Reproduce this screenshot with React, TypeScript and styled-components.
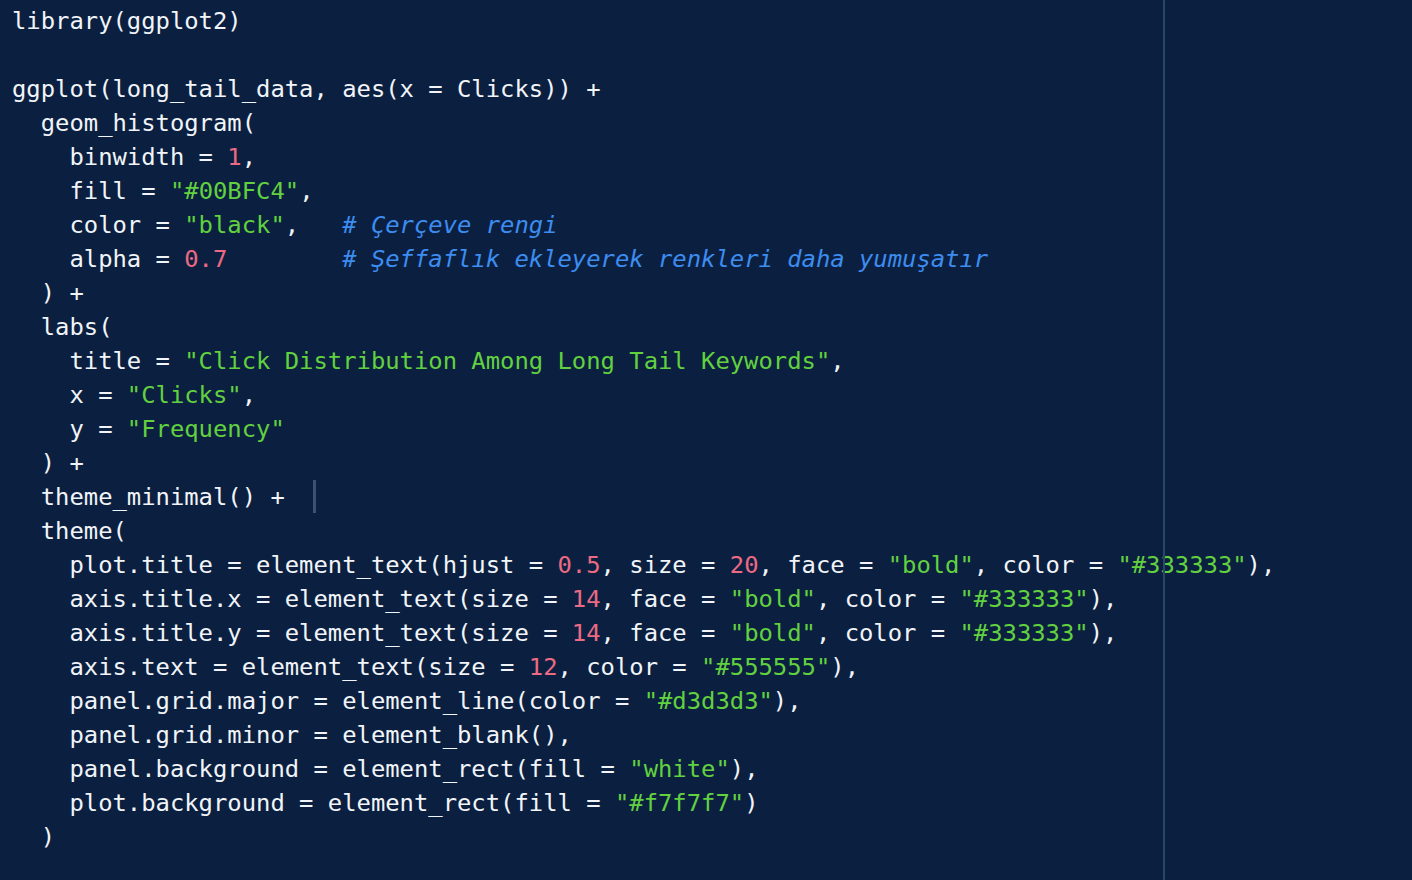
import React from "react";
import styled, { createGlobalStyle } from "styled-components";

const Global = createGlobalStyle`
  html, body { margin: 0; padding: 0; background: #0b2040; }
  #root { min-height: 100vh; }
`;

const Editor = styled.div`
  position: relative;
  width: 1412px;
  height: 880px;
  overflow: hidden;
  background: #0b2040;
  box-sizing: border-box;
  padding: 4px 0 0 12px;
`;

const MarginLine = styled.div`
  position: absolute;
  top: 0;
  bottom: 0;
  left: 1163px;
  width: 2px;
  background: #2c4668;
`;

const Code = styled.div`
  display: flex;
  flex-direction: column;
  font-family: "DejaVu Sans Mono", "Liberation Mono", monospace;
  font-size: 23.85px;
  color: #f1f4f8;
`;

const Line = styled.div`
  height: 34px;
  line-height: 34px;
  white-space: pre;
`;

type Kind = "num" | "str" | "com";

const colors: Record<Kind, string> = {
  num: "#ec6a84",
  str: "#62d13f",
  com: "#3d8cf0",
};

const Tok = styled.span<{ $k: Kind }>`
  color: ${(p) => colors[p.$k]};
  font-style: ${(p) => (p.$k === "com" ? "italic" : "normal")};
`;

const Cursor = styled.span`
  display: inline-block;
  width: 3px;
  height: 33px;
  vertical-align: top;
  background: #3b5274;
`;

const N = ({ children }: { children: React.ReactNode }) => <Tok $k="num">{children}</Tok>;
const S = ({ children }: { children: React.ReactNode }) => <Tok $k="str">{children}</Tok>;
const C = ({ children }: { children: React.ReactNode }) => <Tok $k="com">{children}</Tok>;

export default function App() {
  return (
    <>
      <Global />
      <Editor>
        <MarginLine />
        <Code>
          <Line>library(ggplot2)</Line>
          <Line> </Line>
          <Line>ggplot(long_tail_data, aes(x = Clicks)) +</Line>
          <Line>  geom_histogram(</Line>
          <Line>
            {"    binwidth = "}<N>1</N>,
          </Line>
          <Line>
            {"    fill = "}<S>"#00BFC4"</S>,
          </Line>
          <Line>
            {"    color = "}<S>"black"</S>{",   "}<C># Çerçeve rengi</C>
          </Line>
          <Line>
            {"    alpha = "}<N>0.7</N>{"        "}<C># Şeffaflık ekleyerek renkleri daha yumuşatır</C>
          </Line>
          <Line>  ) +</Line>
          <Line>  labs(</Line>
          <Line>
            {"    title = "}<S>"Click Distribution Among Long Tail Keywords"</S>,
          </Line>
          <Line>
            {"    x = "}<S>"Clicks"</S>,
          </Line>
          <Line>
            {"    y = "}<S>"Frequency"</S>
          </Line>
          <Line>  ) +</Line>
          <Line>
            {"  theme_minimal() +  "}<Cursor />
          </Line>
          <Line>  theme(</Line>
          <Line>
            {"    plot.title = element_text(hjust = "}<N>0.5</N>{", size = "}<N>20</N>
            {", face = "}<S>"bold"</S>{", color = "}<S>"#333333"</S>),
          </Line>
          <Line>
            {"    axis.title.x = element_text(size = "}<N>14</N>{", face = "}<S>"bold"</S>
            {", color = "}<S>"#333333"</S>),
          </Line>
          <Line>
            {"    axis.title.y = element_text(size = "}<N>14</N>{", face = "}<S>"bold"</S>
            {", color = "}<S>"#333333"</S>),
          </Line>
          <Line>
            {"    axis.text = element_text(size = "}<N>12</N>{", color = "}<S>"#555555"</S>),
          </Line>
          <Line>
            {"    panel.grid.major = element_line(color = "}<S>"#d3d3d3"</S>),
          </Line>
          <Line>    panel.grid.minor = element_blank(),</Line>
          <Line>
            {"    panel.background = element_rect(fill = "}<S>"white"</S>),
          </Line>
          <Line>
            {"    plot.background = element_rect(fill = "}<S>"#f7f7f7"</S>)
          </Line>
          <Line>  )</Line>
        </Code>
      </Editor>
    </>
  );
}
